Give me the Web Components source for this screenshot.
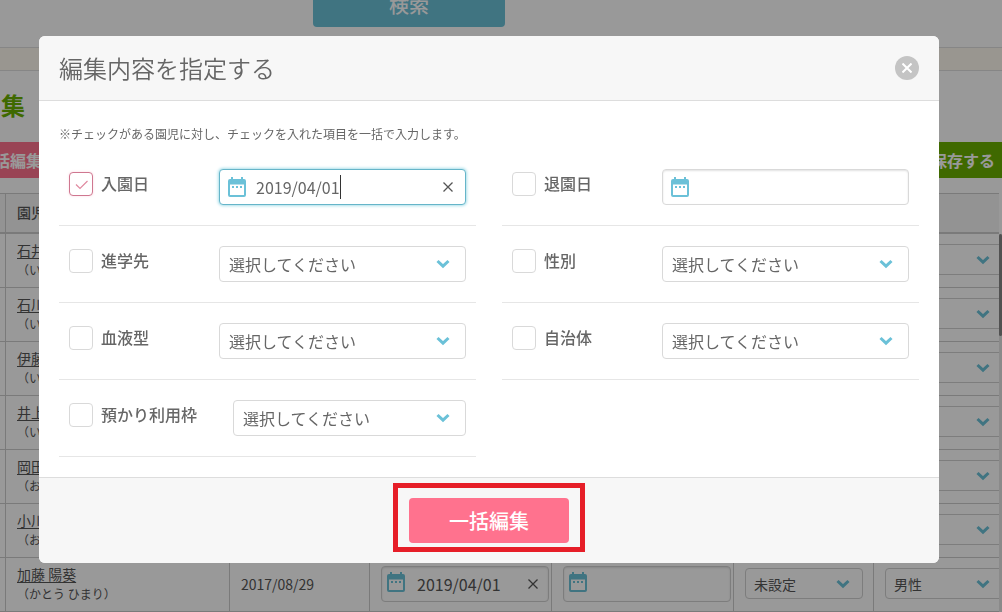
<!DOCTYPE html>
<html lang="ja">
<head>
<meta charset="utf-8">
<meta name="viewport" content="width=device-width, initial-scale=1">
<title>園児情報一括編集</title>
<style>
  html, body { margin: 0; height: 100%; overflow: hidden; background: #fff; }
  body {
    font-family: "Noto Sans CJK JP", "Noto Sans", sans-serif;
    font-size: 16px; color: #666;
    --accent: #6bc1d8; --line: #d9d9d9; --pink: #ff728e; --green: #69b000;
  }
</style>
</head>
<body>
<children-page></children-page>
<edit-dialog></edit-dialog>

<script>
const define = (name, html, setup) => {
  const tpl = document.createElement('template');
  tpl.innerHTML = html;
  customElements.define(name, class extends HTMLElement {
    constructor() {
      super();
      this.attachShadow({ mode: 'open' }).append(tpl.content.cloneNode(true));
    }
    connectedCallback() { if (setup) setup(this, this.shadowRoot); }
  });
};

define('calendar-icon', `
  <style>:host { display: block; width: 18px; height: 20px; } svg { display: block; }</style>
  <svg width="18" height="20" viewBox="0 0 18 20" fill="var(--accent)" aria-hidden="true">
    <path fill-rule="evenodd" d="M2 2h1V0h2v2h8V0h2v2h1a2 2 0 0 1 2 2v14a2 2 0 0 1-2 2H2a2 2 0 0 1-2-2V4a2 2 0 0 1 2-2zM2 7.500v10.500h14V7.500z"/>
    <path d="M4 9h2v2H4zM8 9h2v2H8zM12 9h2v2h-2z"/>
  </svg>`);

define('chevron-icon', `
  <style>:host { display: block; } svg { display: block; }</style>
  <svg width="14" height="10" viewBox="0 0 14 10" fill="none" stroke="var(--accent)" stroke-width="3" aria-hidden="true">
    <path d="M1.500 2 7 7.200 12.500 2"/>
  </svg>`);

define('cross-icon', `
  <style>:host { display: block; } svg { display: block; }</style>
  <svg width="10" height="10" viewBox="0 0 10 10" fill="none" stroke="currentColor" stroke-width="var(--cross, 1.300)" aria-hidden="true">
    <path d="M.5.5l9 9M9.500.5l-9 9"/>
  </svg>`);

define('select-box', `
  <style>
    :host { display: grid; align-items: center; height: 36px; --size: 16px; --pad: 9px; --end: 16px; }
    :host([small]) { height: 31px; --size: 14px; --pad: 8px; --end: 13px; }
    select {
      grid-area: 1 / 1; box-sizing: border-box; width: 100%; height: 100%; margin: 0;
      padding: 0 32px 0 var(--pad); appearance: none; background: #fff;
      border: 1px solid var(--line); border-radius: 4px; color: inherit; outline: 0;
      font: inherit; font-size: var(--size);
    }
    chevron-icon { grid-area: 1 / 1; justify-self: end; margin-right: var(--end); pointer-events: none; }
  </style>
  <select><option></option></select><chevron-icon></chevron-icon>`,
  (el, root) => {
    root.querySelector('option').textContent = el.getAttribute('value') || '';
    root.querySelector('select').setAttribute('aria-label', el.getAttribute('label') || '');
  });

define('date-box', `
  <style>
    :host {
      display: flex; align-items: center; box-sizing: border-box; height: 36px;
      padding: 0 12px 0 8px; background: #fff; border: 1px solid var(--line); border-radius: 4px;
      box-shadow: inset 0 1px 2px rgba(0,0,0,.12);
    }
    :host([small]) { padding: 0 10px 0 5px; }
    :host([active]) { border-color: #66b5c9; box-shadow: 0 0 3px 1px #a9dfea; }
    calendar-icon { flex: none; }
    :host([small]) calendar-icon { margin-bottom: 4px; }
    input {
      flex: 1 1 0; min-width: 0; height: 32px; box-sizing: border-box; margin: 0 0 0 10px; padding: 0;
      border: 0; background: none; outline: 0; font: inherit; color: inherit;
    }
    :host([small]) input { margin-left: 12px; }
    :host([active]) input { flex: 0 0 84px; }
    .caret { display: none; width: 1px; height: 24px; background: #333; margin-right: auto; }
    :host([active]) .caret { display: block; }
    button { display: none; margin: 0; padding: 0; border: 0; background: none; color: #555; }
    :host([value]) button { display: block; }
  </style>
  <calendar-icon></calendar-icon><input type="text"><span class="caret"></span>
  <button type="button" aria-label="クリア"><cross-icon></cross-icon></button>`,
  (el, root) => {
    const input = root.querySelector('input');
    input.value = el.getAttribute('value') || '';
    input.setAttribute('aria-label', el.getAttribute('label') || '');
  });

define('field-row', `
  <style>
    :host {
      display: flex; align-items: flex-start; box-sizing: border-box;
      padding: 20px 10px; border-bottom: 1px solid #e6e6e6;
    }
    .name { display: flex; align-items: center; gap: 8px; height: 30px; flex: none;
            box-sizing: border-box; min-width: 150px; padding-right: 36px; }
    .tick { display: grid; width: 24px; height: 24px; }
    input { grid-area: 1 / 1; appearance: none; box-sizing: border-box; width: 24px; height: 24px;
            margin: 0; border: 1px solid var(--line); border-radius: 4px; background: #fff; }
    input:checked { border-color: #cf7790; box-shadow: 0 0 3px #fbdde4; }
    svg { grid-area: 1 / 1; display: none; pointer-events: none; }
    input:checked + svg { display: block; }
    label { line-height: 24px; padding-bottom: 2px; font-weight: 500; white-space: nowrap; }
    ::slotted(*) { flex: 1 1 0; min-width: 0; }
  </style>
  <div class="name">
    <span class="tick"><input type="checkbox" id="on">
      <svg width="24" height="24" viewBox="0 0 24 24" fill="none" stroke="#e08aa0" stroke-width="1.200" aria-hidden="true"><path d="M7 12.500l4 4 7.500-7.500"/></svg>
    </span>
    <label for="on"></label>
  </div>
  <slot></slot>`,
  (el, root) => {
    root.querySelector('label').textContent = el.getAttribute('label');
    root.querySelector('input').checked = el.hasAttribute('checked');
  });

define('edit-dialog', `
  <style>
    :host { position: fixed; inset: 0; display: flex; justify-content: center; align-items: flex-start;
            box-sizing: border-box; padding: 36px 24px 0 0; background: rgba(0,0,0,.4); }
    section { width: 94%; max-width: 900px; background: #fff; border-radius: 6px; overflow: hidden; }
    header { display: flex; align-items: center; justify-content: space-between; height: 64px;
             padding: 0 20px; background: #f7f7f7; border-bottom: 1px solid #ddd; }
    h2 { margin: 0; font-size: 24px; line-height: 36px; font-weight: 350; }
    header button { display: grid; place-items: center; width: 24px; height: 24px; padding: 0; border: 0;
             border-radius: 50%; background: #c4c4c4; color: #fff; --cross: 2; }
    .body { padding: 24px 20px 20px; }
    p { margin: 0 0 6px; font-size: 12px; line-height: 18px; }
    .grid { display: grid; grid-template-columns: 1fr 1fr; column-gap: 26px; }
    footer { display: flex; justify-content: center; padding: 5px 0 11px; background: #f7f7f7; border-top: 1px solid #ddd; }
    .mark { border: 5px solid #e61e28; padding: 10px 11px 4px; }
    .mark button { display: block; width: 160px; height: 45px; border: 0; border-radius: 4px; padding: 0;
             background: var(--pink); color: #fff; font: inherit; font-size: 20px; font-weight: 500; }
  </style>
  <section role="dialog" aria-modal="true" aria-labelledby="t">
    <header><h2 id="t">編集内容を指定する</h2><button type="button" aria-label="閉じる"><cross-icon></cross-icon></button></header>
    <div class="body">
      <p>※チェックがある園児に対し、チェックを入れた項目を一括で入力します。</p>
      <div class="grid">
        <field-row label="入園日" checked><date-box active label="入園日" value="2019/04/01"></date-box></field-row>
        <field-row label="退園日"><date-box label="退園日"></date-box></field-row>
        <field-row label="進学先"><select-box label="進学先" value="選択してください"></select-box></field-row>
        <field-row label="性別"><select-box label="性別" value="選択してください"></select-box></field-row>
        <field-row label="血液型"><select-box label="血液型" value="選択してください"></select-box></field-row>
        <field-row label="自治体"><select-box label="自治体" value="選択してください"></select-box></field-row>
        <field-row label="預かり利用枠"><select-box label="預かり利用枠" value="選択してください"></select-box></field-row>
      </div>
    </div>
    <footer><div class="mark"><button type="button">一括編集</button></div></footer>
  </section>`);

define('children-table', `
  <style>
    :host { display: grid; grid-template-columns: 1fr 3px; font-size: 14px; color: #555; }
    .view { overflow: hidden; }
    table { table-layout: fixed; width: 1014px; border-collapse: separate; border-spacing: 0; border-top: 1px solid #ccc; }
    th, td { box-sizing: border-box; padding: 0 2px 2px 11px; border-right: 1px solid #ccc; text-align: left; vertical-align: middle; }
    th { height: 40px; font-weight: 500; background: #f5f5f5; border-bottom: 2px solid #ccc; }
    td { height: 54px; border-bottom: 1px solid #ccc; }
    td:first-child, th:first-child { padding: 0; }
    td.pick { padding-right: 10px; }
    a { display: block; margin-bottom: 1px; color: inherit; line-height: 20px; text-decoration: underline; text-underline-offset: 2px; white-space: nowrap; }
    small { display: block; font-size: 12px; line-height: 18px; white-space: nowrap; }
    .bar { margin-top: 41px; background: #e6e6e6; }
    .thumb { height: 102px; border-radius: 2px; background: #888; }
    date-box { font-size: 16px; }
    select-box, date-box { --line: #d0d0d0; }
  </style>
  <div class="view"><table>
    <colgroup><col style="width:6px"><col style="width:224px"><col style="width:140px"><col style="width:182px"><col style="width:182px"><col style="width:140px"><col style="width:140px"></colgroup>
    <thead><tr><th></th><th>園児</th><th></th><th></th><th></th><th></th><th></th></tr></thead>
    <tbody></tbody>
  </table></div>
  <div class="bar"><div class="thumb"></div></div>`,
  (el, root) => {
    const rows = [['石井', '（い'], ['石川', '（い'], ['伊藤', '（い'], ['井上', '（い'], ['岡田', '（お'], ['小川', '（お'],
      ['加藤 陽葵', '（かとう ひまり）', '2017/08/29', '2019/04/01', '未設定', '男性']];
    root.querySelector('tbody').innerHTML = rows.map(([name, kana, birth = '', entry, area = '', sex = '']) => `
      <tr><td></td><td><a href="#">${name}</a><small>${kana}</small></td><td>${birth}</td>
      <td><date-box small label="入園日" ${entry ? `value="${entry}"` : ''}></date-box></td>
      <td><date-box small label="退園日"></date-box></td>
      <td class="pick"><select-box small label="自治体" value="${area}"></select-box></td>
      <td class="pick"><select-box small label="性別" value="${sex}"></select-box></td></tr>`).join('');
  });

define('children-page', `
  <style>
    :host { display: block; height: 100%; overflow: hidden; }
    button { border: 0; padding: 0; color: #fff; font: inherit; }
    .search { display: flex; justify-content: center; align-items: flex-end; box-sizing: border-box; height: 47px; padding: 0 184px 20px 0; }
    .search button { flex: none; width: 192px; height: 45px; border-radius: 4px; background: var(--accent); font-size: 20px; font-weight: 500; }
    .band { height: 22px; background: #fffaf0; border: solid #e0e0e0; border-width: 1px 0; }
    h1 { margin: 16px 0 19px; padding-left: 1px; font-size: 24px; line-height: 36px; font-weight: 700; color: var(--green); }
    .tools { display: flex; justify-content: space-between; margin-bottom: 15px; }
    .tools button { display: flex; align-items: center; justify-content: flex-end; height: 36px; font-weight: 700; white-space: nowrap; }
    .bulk { width: 60px; padding-right: 18px; background: var(--pink); }
    .save { width: 110px; padding-right: 7px; background: var(--green); }
  </style>
  <div class="search"><button type="button">検索</button></div>
  <div class="band"></div>
  <h1>集</h1>
  <div class="tools"><button type="button" class="bulk">一括編集</button><button type="button" class="save">保存する</button></div>
  <children-table></children-table>`);
</script>
</body>
</html>
